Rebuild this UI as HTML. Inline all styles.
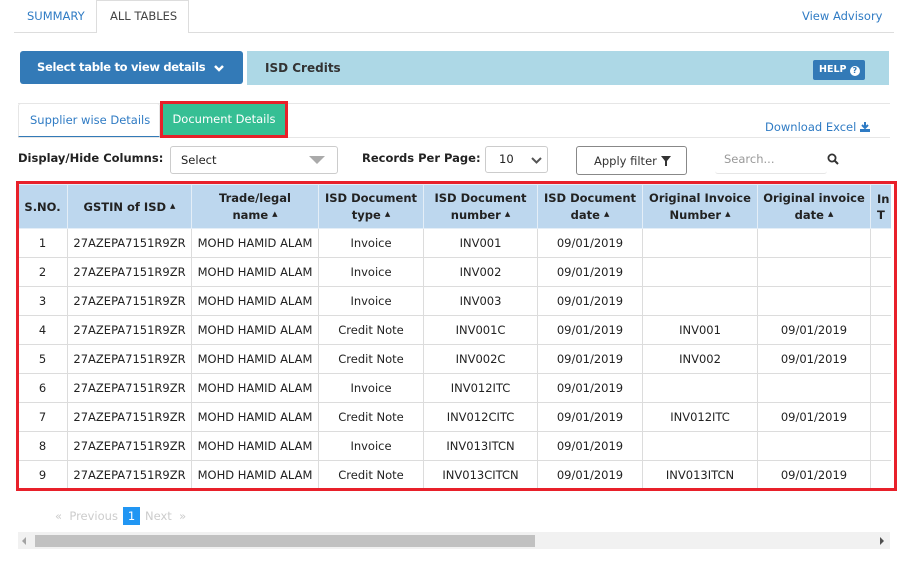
<!DOCTYPE html>
<html><head><meta charset="utf-8">
<style>
*{box-sizing:border-box;margin:0;padding:0}
body{width:906px;height:562px;background:#fff;font-family:"DejaVu Sans","Liberation Sans",sans-serif;position:relative;overflow:hidden;color:#222}
.a{position:absolute}
.blue{color:#2f7bc4}
table{border-collapse:collapse;table-layout:fixed;font-size:11.5px}
td,th{border:1px solid #dcdcdc;text-align:center;height:29px;white-space:nowrap;overflow:hidden}
th{background:#bdd7ee;font-weight:bold;height:44px;white-space:normal;line-height:16px;border-color:#e4eef7;color:#222}
.car{font-size:7px;vertical-align:3px}
</style></head><body>
<div class="a" style="left:14px;top:32px;width:880px;height:1px;background:#ddd"></div>
<div class="a" style="left:96px;top:0;width:93px;height:33px;border:1px solid #ddd;border-bottom:none;background:#fff"></div>
<div class="a blue" style="left:27px;top:9px;font-size:11.5px">SUMMARY</div>
<div class="a" style="left:110px;top:9px;font-size:11.5px;color:#444">ALL TABLES</div>
<div class="a blue" style="left:802px;top:9px;font-size:11.5px">View Advisory</div>
<div class="a" style="left:20px;top:51px;width:223px;height:33px;background:#337ab7;border-radius:3px;color:#fff;font-weight:bold;font-size:11.5px;letter-spacing:-0.3px;line-height:33px;padding-left:17px;white-space:nowrap">Select table to view details</div>
<svg class="a" style="left:213px;top:64px" width="12" height="9"><path d="M2 2 L6 6 L10 2" stroke="#fff" stroke-width="2.5" fill="none"/></svg>
<div class="a" style="left:247px;top:51px;width:642px;height:34px;background:#add8e6;font-weight:bold;font-size:12px;line-height:34px;padding-left:18px;color:#333">ISD Credits</div>
<div class="a" style="left:813px;top:60px;width:52px;height:20px;background:#337ab7;border-radius:2px;color:#fff;font-weight:bold;font-size:9.5px;line-height:20px;padding-left:6px">HELP <span style="display:inline-block;width:10px;height:10px;border-radius:50%;background:#fff;color:#337ab7;font-size:8px;line-height:10px;text-align:center;vertical-align:-1px">?</span></div>
<div class="a" style="left:18px;top:103px;width:872px;height:1px;background:#e6e6e6"></div>
<div class="a" style="left:18px;top:137px;width:872px;height:1px;background:#e6e6e6"></div>
<div class="a" style="left:18px;top:103px;width:142px;height:34px;border:1px solid #e6e6e6;border-bottom:1px solid #337ab7;border-radius:3px 3px 0 0;background:#fff"></div>
<div class="a blue" style="left:30px;top:113px;font-size:11.5px">Supplier wise Details</div>
<div class="a" style="left:160px;top:101px;width:128px;height:37px;border:3px solid #e8202a;background:#36bf94;color:#fff;font-size:11.5px;line-height:31px;text-align:center">Document Details</div>
<div class="a blue" style="left:765px;top:120px;font-size:11.5px">Download Excel <svg width="10" height="10" style="vertical-align:-1px"><path d="M5 0V6M2 3L5 6 8 3" stroke="#2f7bc4" stroke-width="2" fill="none"/><path d="M0 7H10V10H0Z" fill="#2f7bc4"/></svg></div>
<div class="a" style="left:18px;top:151px;font-size:11.5px;font-weight:bold">Display/Hide Columns:</div>
<div class="a" style="left:170px;top:146px;width:168px;height:28px;border:1px solid #ccc;border-radius:3px;font-size:11.5px;line-height:26px;padding-left:10px">Select</div>
<svg class="a" style="left:309px;top:156px" width="16" height="9"><path d="M0 0H16L8 8Z" fill="#aaa"/></svg>
<div class="a" style="left:362px;top:151px;font-size:11.5px;font-weight:bold">Records Per Page:</div>
<div class="a" style="left:485px;top:146px;width:63px;height:27px;border:1px solid #ccc;border-radius:3px;font-size:11.5px;line-height:25px;padding-left:13px">10</div>
<svg class="a" style="left:531px;top:157px" width="11" height="8"><path d="M1 1L5.5 5.5 10 1" stroke="#555" stroke-width="2" fill="none"/></svg>
<div class="a" style="left:576px;top:146px;width:111px;height:29px;border:1px solid #888;border-radius:3px;font-size:11.5px;line-height:29px;padding-left:17px;color:#333">Apply filter <svg width="10" height="10" style="vertical-align:-1px"><path d="M0 0H10L6 5V10H4V5Z" fill="#333"/></svg></div>
<div class="a" style="left:715px;top:147px;width:112px;height:27px;border-bottom:1px solid #e6e6e6;border-radius:3px;font-size:11.5px;line-height:25px;padding-left:9px;color:#999">Search...</div>
<svg class="a" style="left:827px;top:153px" width="12" height="12"><circle cx="5" cy="5" r="3.6" stroke="#333" stroke-width="1.8" fill="none"/><path d="M7.5 7.5L11 11" stroke="#333" stroke-width="2"/></svg>
<div class="a" style="left:16px;top:181px;width:881px;height:310px;border:3px solid #e8202a"></div>
<div class="a" style="left:19px;top:184px;width:872px;height:304px;overflow:hidden">
<table style="width:900px;margin-left:-2px">
<colgroup><col style="width:50px"><col style="width:124px"><col style="width:127px"><col style="width:105px"><col style="width:114px"><col style="width:105px"><col style="width:115px"><col style="width:113px"><col style="width:47px"></colgroup>
<tr><th>S.NO.</th><th>GSTIN of ISD <span class="car">&#9650;</span></th><th>Trade/legal<br>name <span class="car">&#9650;</span></th><th>ISD Document type <span class="car">&#9650;</span></th><th>ISD Document number <span class="car">&#9650;</span></th><th>ISD Document date <span class="car">&#9650;</span></th><th>Original Invoice Number <span class="car">&#9650;</span></th><th>Original invoice date <span class="car">&#9650;</span></th><th style="text-align:left;padding-left:6px">In<br>T</th></tr>
<tr><td>1</td><td>27AZEPA7151R9ZR</td><td>MOHD HAMID ALAM</td><td>Invoice</td><td>INV001</td><td>09/01/2019</td><td></td><td></td><td></td></tr>
<tr><td>2</td><td>27AZEPA7151R9ZR</td><td>MOHD HAMID ALAM</td><td>Invoice</td><td>INV002</td><td>09/01/2019</td><td></td><td></td><td></td></tr>
<tr><td>3</td><td>27AZEPA7151R9ZR</td><td>MOHD HAMID ALAM</td><td>Invoice</td><td>INV003</td><td>09/01/2019</td><td></td><td></td><td></td></tr>
<tr><td>4</td><td>27AZEPA7151R9ZR</td><td>MOHD HAMID ALAM</td><td>Credit Note</td><td>INV001C</td><td>09/01/2019</td><td>INV001</td><td>09/01/2019</td><td></td></tr>
<tr><td>5</td><td>27AZEPA7151R9ZR</td><td>MOHD HAMID ALAM</td><td>Credit Note</td><td>INV002C</td><td>09/01/2019</td><td>INV002</td><td>09/01/2019</td><td></td></tr>
<tr><td>6</td><td>27AZEPA7151R9ZR</td><td>MOHD HAMID ALAM</td><td>Invoice</td><td>INV012ITC</td><td>09/01/2019</td><td></td><td></td><td></td></tr>
<tr><td>7</td><td>27AZEPA7151R9ZR</td><td>MOHD HAMID ALAM</td><td>Credit Note</td><td>INV012CITC</td><td>09/01/2019</td><td>INV012ITC</td><td>09/01/2019</td><td></td></tr>
<tr><td>8</td><td>27AZEPA7151R9ZR</td><td>MOHD HAMID ALAM</td><td>Invoice</td><td>INV013ITCN</td><td>09/01/2019</td><td></td><td></td><td></td></tr>
<tr><td>9</td><td>27AZEPA7151R9ZR</td><td>MOHD HAMID ALAM</td><td>Credit Note</td><td>INV013CITCN</td><td>09/01/2019</td><td>INV013ITCN</td><td>09/01/2019</td><td></td></tr>
</table></div>
<div class="a" style="left:55px;top:509px;font-size:11.5px;color:#ccc">&laquo; &nbsp;Previous</div>
<div class="a" style="left:123px;top:507px;width:17px;height:18px;background:#2196f3;color:#fff;font-size:11.5px;line-height:18px;text-align:center">1</div>
<div class="a" style="left:145px;top:509px;font-size:11.5px;color:#ccc">Next &nbsp;&raquo;</div>
<div class="a" style="left:18px;top:532px;width:872px;height:17px;background:#f1f1f1"></div>
<div class="a" style="left:35px;top:535px;width:500px;height:12px;background:#c1c1c1"></div>
<svg class="a" style="left:21px;top:537px" width="6" height="8"><path d="M5 0V8L1 4Z" fill="#a3a3a3"/></svg>
<svg class="a" style="left:879px;top:537px" width="6" height="8"><path d="M1 0V8L5 4Z" fill="#505050"/></svg>
</body></html>
